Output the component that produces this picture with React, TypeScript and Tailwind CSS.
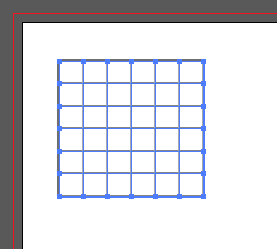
const cols = [0, 1, 2, 3, 4, 5, 6].map((i) => 3 + 24 * i);
const rows = [3, 25, 48, 70, 93, 115, 138];
const BLUE = "#4d7cfe";

function MeshGrid() {
  const anchors: [number, number][] = [];
  cols.forEach((x, i) =>
    rows.forEach((y, j) => {
      if (i === 0 || i === 6 || j === 0 || j === 6) anchors.push([x, y]);
    }),
  );
  const w = cols[6] - cols[0] + 1;
  const h = rows[6] - rows[0] + 1;
  return (
    <svg width={152} height={142} shapeRendering="crispEdges">
      {/* gray mesh strokes, sitting just off the selection lines */}
      {rows.map((y, j) => (
        <rect
          key={"gh" + j}
          x={cols[0] - 2}
          y={j === 0 ? y - 2 : y - 1}
          width={w + 2}
          height={j === 0 ? 2 : 1}
          fill={j === 0 ? "#6f6f6f" : "#858585"}
        />
      ))}
      {cols.map((x, i) => (
        <rect
          key={"gv" + i}
          x={i === 0 ? x - 2 : x - 1}
          y={rows[0] - 2}
          width={i === 0 ? 2 : 1}
          height={h + 2}
          fill={i === 0 ? "#6f6f6f" : "#a9a9a9"}
        />
      ))}
      {/* blue selection lines */}
      {rows.map((y, j) => (
        <rect
          key={"bh" + j}
          x={cols[0]}
          y={y}
          width={w}
          height={j === 6 ? 2 : 1}
          fill={BLUE}
        />
      ))}
      {cols.map((x, i) => (
        <rect
          key={"bv" + i}
          x={x}
          y={rows[0]}
          width={i === 6 ? 2 : 1}
          height={h}
          fill={BLUE}
        />
      ))}
      {anchors.map(([x, y], k) => (
        <rect key={"a" + k} x={x - 2} y={y - 2} width={5} height={5} fill={BLUE} />
      ))}
    </svg>
  );
}

export default function App() {
  return (
    <div className="flex h-[249px] w-[277px] overflow-hidden bg-[#595959] pl-[13px] pt-[13px]">
      {/* bleed guide */}
      <div className="flex flex-1 bg-[#f0141c] pl-[1px] pt-[1px]">
        <div className="flex flex-1 bg-[#595959] pl-[8px] pt-[8px]">
          {/* artboard edge */}
          <div className="flex flex-1 bg-[#000000] pl-[1px] pt-[1px]">
            <div className="flex-1 bg-white pl-[33px] pt-[35px]">
              <MeshGrid />
            </div>
          </div>
        </div>
      </div>
    </div>
  );
}
